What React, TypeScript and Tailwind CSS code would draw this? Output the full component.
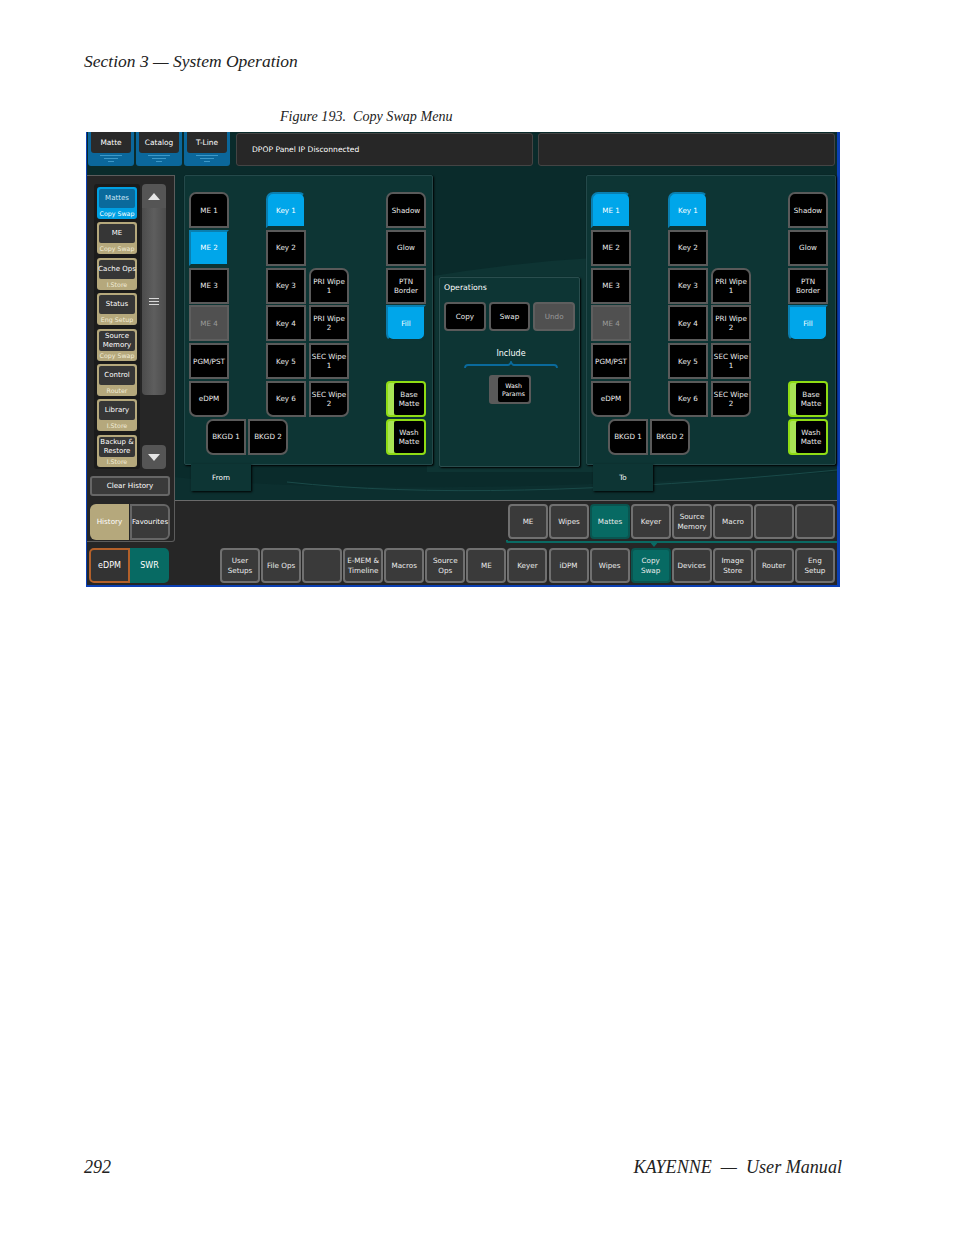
const mono = "font-['DejaVu_Sans',sans-serif]";

function Btn({ label, tone = "black", shape = "", className = "" }: { label: string; tone?: string; shape?: string; className?: string }) {
  const tones: Record<string, string> = {
    black: "bg-black border-[#5a5a5a] text-[#ececec]",
    blue: "bg-[#00a6ea] border-[#0d3534] border-l-[#0a7fb0] border-t-[#0a7fb0] text-white",
    dim: "bg-[#505050] border-[#5e5e5e] text-[#9a9a9a]",
  };
  return (
    <div className={`flex items-center justify-center text-center leading-[9px] whitespace-pre text-[7.2px] border-2 ${tones[tone]} ${shape} ${className}`}>
      {label}
    </div>
  );
}

function GreenBtn({ label }: { label: string }) {
  return (
    <div className="flex h-[36px] bg-[#8fdc14] rounded-[4px] p-[2px]">
      <div className="w-[6px] shrink-0 bg-[#a8e455] rounded-l-[2px]" />
      <div className="flex-1 flex items-center justify-center text-center whitespace-pre bg-black rounded-[2px] text-[#ececec] text-[7.2px] leading-[9px]">{label}</div>
    </div>
  );
}

function SourcePanel({ sel, keySel, tab, width }: { sel: string; keySel: string; tab: string; width: string }) {
  const mes = ["ME 1", "ME 2", "ME 3", "ME 4", "PGM/PST", "eDPM"];
  const keys = ["Key 1", "Key 2", "Key 3", "Key 4", "Key 5", "Key 6"];
  const wipes = ["PRI Wipe\n1", "PRI Wipe\n2", "SEC Wipe\n1", "SEC Wipe\n2"];
  const right = ["Shadow", "Glow", "PTN\nBorder"];
  const edge = (i: number, n: number) => (i === 0 ? "rounded-t-[7px]" : i === n - 1 ? "rounded-b-[7px]" : "");
  return (
    <div className={`flex flex-col ${width}`}>
      <div className="h-[290px] bg-[#0d3534] border border-[#24494a] rounded-[2px] shadow-[1px_1px_2px_#000] pt-[16px] pl-[4px]">
        <div className="grid grid-cols-[40px_37px_40px_3px_40px_37px_40px] auto-rows-[36px] gap-y-[1.8px] w-[237px]">
          <div className="flex flex-col gap-[1.8px] row-span-6 col-start-1">
            {mes.map((m, i) => (
              <Btn key={m} label={m} tone={m === sel ? "blue" : m === "ME 4" ? "dim" : "black"} shape={edge(i, 6)} className="h-[36px]" />
            ))}
          </div>
          <div className="flex flex-col gap-[1.8px] row-span-6 col-start-3">
            {keys.map((k, i) => (
              <Btn key={k} label={k} tone={k === keySel ? "blue" : "black"} shape={i === 0 ? "rounded-t-[7px]" : i === 5 ? "rounded-bl-[7px]" : ""} className="h-[36px]" />
            ))}
          </div>
          <div className="flex flex-col gap-[1.8px] row-span-6 col-start-5 pt-[75.6px]">
            {wipes.map((w, i) => (
              <Btn key={w} label={w} shape={i === 0 ? "rounded-t-[7px]" : i === 3 ? "rounded-br-[7px]" : ""} className="h-[36px]" />
            ))}
          </div>
          <div className="flex flex-col gap-[1.8px] row-span-6 col-start-7">
            {right.map((r, i) => (
              <Btn key={r} label={r} shape={i === 0 ? "rounded-t-[7px]" : ""} className="h-[36px]" />
            ))}
            <Btn label="Fill" tone="blue" shape="rounded-b-[7px]" className="h-[36px]" />
            <div className="h-[36px]" />
            <GreenBtn label={"Base\nMatte"} />
          </div>
          <div className="col-span-6 flex gap-[2px] pl-[17px]">
            <Btn label="BKGD 1" shape="rounded-l-[7px]" className="w-[40px]" />
            <Btn label="BKGD 2" shape="rounded-r-[7px]" className="w-[40px]" />
          </div>
          <GreenBtn label={"Wash\nMatte"} />
        </div>
      </div>
      <div className="ml-[7px] w-[60px] h-[27px] -mt-px pt-px bg-[#0d3534] shadow-[1px_1px_2px_#000] flex items-center justify-center text-white text-[7.2px]">
        {tab}
      </div>
    </div>
  );
}

function TopTab({ label }: { label: string }) {
  return (
    <div className="w-[46px] h-[34px] rounded-b-[3px] bg-[#0b679b] flex flex-col px-[3px]">
      <div className="h-[21px] rounded-b-[3px] bg-[#2a2a2a] flex items-center justify-center text-white text-[7.4px]">{label}</div>
      <div className="flex flex-col items-center gap-[2px] mt-[2px]">
        <div className="w-[22px] h-px bg-[#3d98c8]" />
        <div className="w-[14px] h-px bg-[#3d98c8]" />
        <div className="w-[6px] h-px bg-[#3d98c8]" />
      </div>
    </div>
  );
}

function HistoryItem({ top, bottom, active = false, tight = false }: { top: string; bottom: string; active?: boolean; tight?: boolean }) {
  return (
    <div className={`w-[40px] h-[32px] rounded-[3px] px-[2px] pt-[2px] flex flex-col text-center ${active ? "bg-[#00a0e3]" : "bg-[#b5a87c]"}`}>
      <div className={`${tight ? "h-[21px]" : "h-[19px]"} rounded-[2px] flex items-center justify-center whitespace-pre leading-[9px] text-[7px] ${active ? "bg-[#0a6a9c] text-[#cfe8f5]" : "bg-[#363636] text-white"}`}>
        {top}
      </div>
      <div className={`flex-1 flex items-center justify-center text-[6.3px] whitespace-nowrap ${active ? "text-white" : "text-[#f2ecd8]"}`}>{bottom}</div>
    </div>
  );
}

function GrayBtn({ label, tone = "gray", className = "" }: { label: string; tone?: string; className?: string }) {
  const tones: Record<string, string> = {
    gray: "bg-[#3a3a3a] border-[#707070]",
    teal: "bg-[#076a63] border-[#0a5550]",
  };
  return (
    <div className={`w-[40px] h-[35px] rounded-[4px] border-2 flex items-center justify-center text-center whitespace-pre leading-[9.5px] text-[7.2px] text-[#ececec] ${tones[tone]} ${className}`}>
      {label}
    </div>
  );
}

function Sidebar() {
  const items = [
    { top: "ME", bottom: "Copy Swap" },
    { top: "Cache Ops", bottom: "I.Store" },
    { top: "Status", bottom: "Eng  Setup" },
    { top: "Source\nMemory", bottom: "Copy Swap", tight: true },
    { top: "Control", bottom: "Router" },
    { top: "Library", bottom: "I.Store" },
    { top: "Backup &\nRestore", bottom: "I.Store", tight: true },
  ];
  return (
    <div className="w-[88px] h-[367px] shrink-0 bg-[#262626] border-t border-r border-b border-[#5c5c5c] rounded-br-[3px] pt-[8px]">
      <div className="flex ml-[7px] gap-[2px]">
        <div className="w-[46px] h-[285px] bg-[#1b1b1b] rounded-[3px] px-[3px] pt-[3px] flex flex-col gap-[3.4px]">
          <HistoryItem top="Mattes" bottom="Copy Swap" active />
          {items.map((it) => (
            <HistoryItem key={it.top} top={it.top} bottom={it.bottom} tight={it.tight} />
          ))}
        </div>
        <div className="w-[24px] h-[285px] flex flex-col">
          <div className="h-[24px] bg-[#555] rounded-t-[4px] flex items-center justify-center">
            <svg width="12" height="7" viewBox="0 0 12 7"><path d="M6 0 L12 7 H0 Z" fill="#e6e6e6" /></svg>
          </div>
          <div className="h-[187px] bg-gradient-to-r from-[#4c4c4c] via-[#5e5e5e] to-[#4c4c4c] rounded-b-[4px] flex flex-col items-center justify-center gap-[2px]">
            <div className="w-[10px] h-px bg-[#d8d8d8]" />
            <div className="w-[10px] h-px bg-[#d8d8d8]" />
            <div className="w-[10px] h-px bg-[#d8d8d8]" />
          </div>
          <div className="h-[50px]" />
          <div className="h-[24px] bg-[#555] rounded-[4px] flex items-center justify-center">
            <svg width="12" height="7" viewBox="0 0 12 7"><path d="M6 7 L12 0 H0 Z" fill="#e6e6e6" /></svg>
          </div>
        </div>
      </div>
      <div className="ml-[3px] mt-[7px] w-[80px] h-[20px] rounded-[3px] bg-[#3a3a3a] border-2 border-[#666] flex items-center justify-center text-white text-[7.2px]">
        Clear History
      </div>
      <div className="ml-[3px] mt-[8px] flex gap-px">
        <div className="w-[39px] h-[36px] rounded-l-[6px] bg-[#b5a87c] flex items-center justify-center text-white text-[7.2px]">History</div>
        <div className="w-[40px] h-[36px] rounded-r-[6px] bg-[#3a3a3a] border-2 border-[#666] flex items-center justify-center text-white text-[7px]">Favourites</div>
      </div>
    </div>
  );
}

function OperationsPanel() {
  return (
    <div className="w-[141px] h-[190px] mt-[102px] bg-[#0d3534] border border-[#2a4e4e] rounded-[2px] shadow-[1px_1px_2px_#000] px-[4px] pt-[5px] text-white">
      <div className="text-[7.8px] leading-[10px]">Operations</div>
      <div className="flex gap-[3px] mt-[9px]">
        <Btn label="Copy" shape="rounded-[4px]" className="w-[42px] h-[29px]" />
        <Btn label="Swap" shape="rounded-[4px]" className="w-[42px] h-[29px]" />
        <Btn label="Undo" tone="dim" shape="rounded-[4px]" className="w-[42px] h-[29px]" />
      </div>
      <div className="text-center text-[8px] leading-[10px] mt-[18px] pl-[3px]">Include</div>
      <svg className="block mx-auto mt-[2px] ml-[20px]" width="94" height="8" viewBox="0 0 94 8" fill="none">
        <path d="M1 7 Q1 4 4 4 H44 Q46 4 47 1 Q48 4 50 4 H90 Q93 4 93 7" stroke="#0a6a9c" strokeWidth="1.8" />
      </svg>
      <div className="mt-[6px] ml-[45px] w-[42px] h-[29px] rounded-[3px] bg-[#5a5a5a] border-2 border-[#5a5a5a] flex">
        <div className="w-[7px]" />
        <div className="flex-1 bg-black rounded-[2px] flex items-center justify-center text-center whitespace-pre text-[6.2px] leading-[8px]">{"Wash\nParams"}</div>
      </div>
    </div>
  );
}

function Screen() {
  const row1 = ["ME", "Wipes", "Mattes", "Keyer", "Source\nMemory", "Macro", "", ""];
  const row2 = ["User\nSetups", "File Ops", "", "E-MEM &\nTimeline", "Macros", "Source\nOps", "ME", "Keyer", "iDPM", "Wipes", "Copy\nSwap", "Devices", "Image\nStore", "Router", "Eng\nSetup"];
  return (
    <div className={`relative ml-[86px] w-[754px] h-[455px] bg-[#262626] border-l border-r-[3px] border-b-2 border-[#0b3fb4] ${mono}`}>
      <div className="relative h-[368px] bg-[#0a2b2b] overflow-hidden">
        <svg className="absolute inset-0" width="750" height="368" viewBox="0 0 750 368" fill="none">
          <path d="M340 145 Q430 130 520 125 L520 340 L340 340 Z" fill="#0e3433" />
          <path d="M88 345 Q300 368 750 340 L750 368 L88 368 Z" fill="#0c2f2f" />
          <path d="M200 350 Q400 372 750 338" stroke="#1a4a49" />
        </svg>
      </div>
      <div className="absolute inset-0 flex flex-col">
        <div className="h-[43px] flex pl-px">
          <div className="flex gap-[2px]">
            <TopTab label="Matte" />
            <TopTab label="Catalog" />
            <TopTab label="T-Line" />
          </div>
          <div className="ml-[6px] mt-px w-[297px] h-[33px] rounded-[3px] bg-[#272727] border border-[#444] flex items-center pl-[15px] text-white text-[7.6px]">
            DPOP Panel IP Disconnected
          </div>
          <div className="ml-[5px] mt-px w-[297px] h-[33px] rounded-[3px] bg-[#272727] border border-[#444]" />
        </div>
        <div className="flex">
          <Sidebar />
          <div className="flex-1">
            <div className="h-[325px] flex gap-[6px] pl-[9px]">
              <SourcePanel sel="ME 2" keySel="Key 1" tab="From" width="w-[249px]" />
              <OperationsPanel />
              <SourcePanel sel="ME 1" keySel="Key 1" tab="To" width="w-[250px]" />
            </div>
            <div className="border-t border-[#6a6a6a] pt-[3px]">
              <div className="flex justify-end gap-px pr-[2px]">
                {row1.map((l, i) => (
                  <GrayBtn key={i} label={l} tone={l === "Mattes" ? "teal" : "gray"} />
                ))}
              </div>
              <div className="relative ml-[331px] mt-[1px] h-[3px] border-b-2 border-l-2 rounded-bl-[2px] border-[#0a6a63]">
                <svg className="absolute left-[141px] top-[1px]" width="10" height="6" viewBox="0 0 10 6"><path d="M0 0 H10 L5 6 Z" fill="#0a6a63" /></svg>
              </div>
            </div>
          </div>
        </div>
        <div className="flex mt-[5px] pl-[2px]">
          <div className="w-[41px] h-[35px] rounded-l-[5px] bg-[#333] border-2 border-[#b3602a] flex items-center justify-center text-white text-[8px]">eDPM</div>
          <div className="w-[39px] h-[35px] rounded-r-[5px] bg-[#076a63] flex items-center justify-center text-white text-[8px]">SWR</div>
          <div className="ml-[51px] flex gap-[1.07px]">
            {row2.map((l, i) => (
              <GrayBtn key={i} label={l} tone={l === "Copy\nSwap" ? "teal" : "gray"} />
            ))}
          </div>
        </div>
      </div>
    </div>
  );
}

export default function App() {
  return (
    <div className="relative w-[954px] h-[1235px] bg-white font-['Liberation_Serif',serif] italic text-[#222] overflow-hidden">
      <div className="pl-[84px] pt-[50px] text-[17.5px] leading-[22px]">Section 3 — System Operation</div>
      <div className="pl-[280px] mt-[35px] text-[14.1px] leading-[18px]">Figure 193.&nbsp; Copy Swap Menu</div>
      <div className="mt-[7px] not-italic">
        <Screen />
      </div>
      <div className="flex justify-between pl-[84px] pr-[112px] mt-[569px] text-[18.1px] leading-[22px]">
        <span>292</span>
        <span>KAYENNE &nbsp;—&nbsp; User Manual</span>
      </div>
    </div>
  );
}
